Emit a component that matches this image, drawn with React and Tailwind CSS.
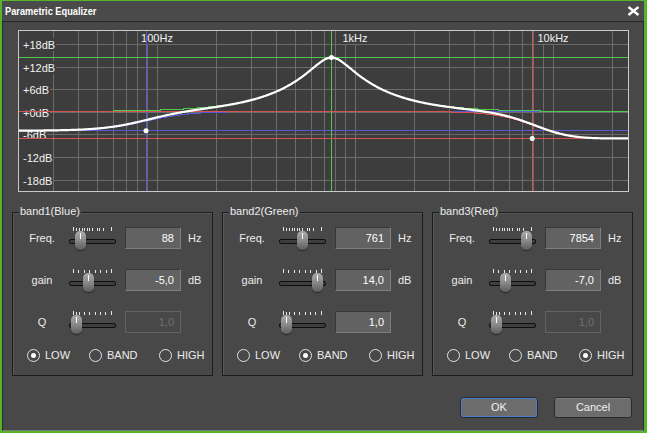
import React from "react";

const FS = 48000;
const fx = (f) => -239 + 198 * Math.log10(f);
const gy = (db) => 111.5 - db * 3.85;
const fOf = (x) => Math.pow(10, (x + 239) / 198);

const BANDS = [
  { name: "band1(Blue)", color: "#5858d4", type: "low", f: 88, g: -5, q: 1, mode: "LOW" },
  { name: "band2(Green)", color: "#4fc84f", type: "peak", f: 761, g: 14, q: 1, mode: "BAND" },
  { name: "band3(Red)", color: "#d45252", type: "high", f: 7854, g: -7, q: 1, mode: "HIGH" },
];

function coeffs(type, f0, gain, q) {
  const A = Math.pow(10, gain / 40);
  const w0 = (2 * Math.PI * f0) / FS;
  const cs = Math.cos(w0);
  const sn = Math.sin(w0);
  if (type === "peak") {
    const al = sn / (2 * q);
    return [1 + al * A, -2 * cs, 1 - al * A, 1 + al / A, -2 * cs, 1 - al / A];
  }
  const sa = 2 * Math.sqrt(A) * (sn / Math.SQRT2);
  if (type === "low")
    return [
      A * (A + 1 - (A - 1) * cs + sa),
      2 * A * (A - 1 - (A + 1) * cs),
      A * (A + 1 - (A - 1) * cs - sa),
      A + 1 + (A - 1) * cs + sa,
      -2 * (A - 1 + (A + 1) * cs),
      A + 1 + (A - 1) * cs - sa,
    ];
  return [
    A * (A + 1 + (A - 1) * cs + sa),
    -2 * A * (A - 1 + (A + 1) * cs),
    A * (A + 1 + (A - 1) * cs - sa),
    A + 1 - (A - 1) * cs + sa,
    2 * (A - 1 - (A + 1) * cs),
    A + 1 - (A - 1) * cs - sa,
  ];
}

function magDb(c, f) {
  const w = (2 * Math.PI * f) / FS;
  const c1 = Math.cos(w);
  const c2 = Math.cos(2 * w);
  const [b0, b1, b2, a0, a1, a2] = c;
  const num = b0 * b0 + b1 * b1 + b2 * b2 + 2 * (b0 * b1 + b1 * b2) * c1 + 2 * b0 * b2 * c2;
  const den = a0 * a0 + a1 * a1 + a2 * a2 + 2 * (a0 * a1 + a1 * a2) * c1 + 2 * a0 * a2 * c2;
  return 10 * Math.log10(num / den);
}

const GRID_F = [30, 40, 50, 60, 70, 80, 90, 100, 200, 300, 400, 500, 600, 700, 800, 900, 1000, 2000, 3000, 4000, 5000, 6000, 7000, 8000, 9000, 10000, 20000];
const DB_ROWS = [
  { y: 44, t: "+18dB", w: 32 },
  { y: 67, t: "+12dB", w: 32 },
  { y: 89, t: "+6dB", w: 26 },
  { y: 112, t: "+0dB", w: 26 },
  { y: 134, t: "-6dB", w: 23 },
  { y: 157, t: "-12dB", w: 29 },
  { y: 180, t: "-18dB", w: 29 },
];
const F_LABELS = [
  { f: 100, t: "100Hz", w: 32 },
  { f: 1000, t: "1kHz", w: 25 },
  { f: 10000, t: "10kHz", w: 31 },
];

const vx = (x) => Math.floor(x) + 0.5;

function Graph() {
  const xs = [];
  for (let x = 18; x <= 629; x++) xs.push(x);
  const cs = BANDS.map((b) => coeffs(b.type, b.f, b.g, b.q));
  // band curves snapped to whole pixel rows, like the GDI drawing
  const curves = cs.map((c) => xs.map((x) => `${x},${vx(gy(magDb(c, fOf(x))))}`).join(" "));
  const total = xs
    .map((x) => {
      const f = fOf(x);
      return `${x},${gy(cs.reduce((s, c) => s + magDb(c, f), 0)).toFixed(2)}`;
    })
    .join(" ");
  const font = "'Liberation Sans', Arial, sans-serif";

  return (
    <svg width="611" height="162" viewBox="18 30 611 162" className="block">
      <rect x="18" y="30" width="611" height="162" fill="#3d3d3d" />
      {GRID_F.map((f) => (
        <line key={f} x1={vx(fx(f))} x2={vx(fx(f))} y1="30" y2="192" stroke="#6b6b6b" strokeWidth="1" />
      ))}
      {DB_ROWS.map((r) => (
        <line key={r.t} x1="18" x2="629" y1={r.y + 0.5} y2={r.y + 0.5} stroke="#6b6b6b" strokeWidth="1" />
      ))}
      {DB_ROWS.map((r) => (
        <g key={r.t}>
          <rect x="19" y={r.y - 6} width={r.w + 5} height="13" fill="#3d3d3d" />
          <text x="23" y={r.y + 4.5} fontFamily={font} fontSize="11" fill="#f2f2f2">
            {r.t}
          </text>
        </g>
      ))}
      {F_LABELS.map((l) => {
        const cx = fx(l.f);
        return (
          <g key={l.t}>
            <rect x={cx - l.w / 2 - 1} y="31" width={l.w + 2} height="13" fill="#3d3d3d" />
            <text x={cx} y="42" textAnchor="middle" fontFamily={font} fontSize="11" fill="#f2f2f2">
              {l.t}
            </text>
          </g>
        );
      })}
      {BANDS.map((b) => (
        <g key={b.name}>
          <line x1="18" x2="629" y1={vx(gy(b.g))} y2={vx(gy(b.g))} stroke={b.color} strokeWidth="1" />
          <line x1={vx(fx(b.f))} x2={vx(fx(b.f))} y1="30" y2="192" stroke={b.color} strokeWidth="1" />
        </g>
      ))}
      {curves.map((p, i) => (
        <polyline key={i} points={p} fill="none" stroke={BANDS[i].color} strokeWidth="1" shapeRendering="crispEdges" />
      ))}
      <polyline points={total} fill="none" stroke="#ffffff" strokeWidth="2.2" />
      {BANDS.map((b) => (
        <circle key={b.name} cx={fx(b.f)} cy={gy(b.g)} r="2.5" fill="#ffffff" />
      ))}
      <rect x="18.5" y="30.5" width="610" height="161" fill="none" stroke="#c8c8c8" strokeWidth="1" />
    </svg>
  );
}

const FREQ_TICKS = [4, 7, 10, 13, 15, 18, 20, 23, 28, 30, 34, 42];
const GAIN_TICKS = [4, 9, 15, 20, 26, 31, 37, 42];
const Q_TICKS = [4, 7, 10, 15, 20, 26, 31, 36, 42];

function Slider({ ticks, pos }) {
  return (
    <div className="relative w-[47px] h-[22px] shrink-0">
      {ticks.map((t, i) => (
        <span
          key={i}
          className={`absolute w-px bg-[#e6e6e6] ${i === 0 || i === ticks.length - 1 ? "top-0 h-[4px]" : "top-[1px] h-[3px]"}`}
          style={{ left: t }}
        />
      ))}
      <div className="absolute left-0 right-0 top-[12px] h-[5px] rounded-[2px] border border-[#0e0e0e] bg-[#3e3e3e]" />
      <div
        className="absolute top-[4px] w-[11px] h-[19px] rounded-[5px] bg-gradient-to-b from-[#aaaaaa] via-[#8a8a8a] to-[#5c5c5c] shadow-[0_1px_1px_rgba(0,0,0,0.5)]"
        style={{ left: pos - 5.5 }}
      >
        <span className="absolute left-[5px] top-[2px] w-px h-[6px] bg-white" />
      </div>
    </div>
  );
}

function Field({ value, disabled }) {
  return (
    <div
      className={`ml-[9px] w-[56px] h-[22px] shrink-0 flex items-center justify-end pr-[6px] text-[11px] border ${
        disabled
          ? "bg-[#484848] border-[#626262] text-[#707070]"
          : "bg-[#626262] border-t-[#383838] border-l-[#383838] border-r-[#7e7e7e] border-b-[#7e7e7e] text-white"
      }`}
    >
      {value}
    </div>
  );
}

function Radio({ label, checked, width }) {
  return (
    <div className={`flex items-center gap-[5px] ${width}`}>
      <span className="w-[13px] h-[13px] rounded-full border-[1.5px] border-[#e2e2e2] flex items-center justify-center">
        {checked && <span className="w-[5px] h-[5px] rounded-full bg-white" />}
      </span>
      <span className="text-[11px] text-[#ececec]">{label}</span>
    </div>
  );
}

function Row({ label, children }) {
  return (
    <div className="flex items-center h-[22px]">
      <div className="w-[56px] pl-[2px] shrink-0 text-center text-[11px] text-[#ececec]">{label}</div>
      {children}
    </div>
  );
}

const fmt = (v) => v.toFixed(1).replace(".", ",");

function BandBox({ band }) {
  const freqPos = 11.5 + (Math.log10(band.f) - Math.log10(88)) * 13.3;
  const gainPos = 19 + (band.g + 5) * 1.04;
  const qDisabled = band.mode !== "BAND";
  return (
    <div className="relative w-[201px] h-[164px] shrink-0 border border-[#1c1c1c] shadow-[inset_1px_1px_0_#585858]">
      <span className="absolute left-[6px] top-[-8px] px-[1px] bg-[#484848] text-[11px] leading-[13px] text-[#ececec]">
        {band.name}
      </span>
      <div className="flex flex-col gap-[20px] pt-[14px]">
        <Row label="Freq.">
          <Slider ticks={FREQ_TICKS} pos={freqPos} />
          <Field value={String(band.f)} />
          <span className="ml-[7px] text-[11px] text-[#ececec]">Hz</span>
        </Row>
        <Row label="gain">
          <Slider ticks={GAIN_TICKS} pos={gainPos} />
          <Field value={fmt(band.g)} />
          <span className="ml-[7px] text-[11px] text-[#ececec]">dB</span>
        </Row>
        <Row label="Q">
          <Slider ticks={Q_TICKS} pos={7.5} />
          <Field value={fmt(band.q)} disabled={qDisabled} />
        </Row>
      </div>
      <div className="flex items-center h-[14px] mt-[15px] pl-[14px]">
        <Radio label="LOW" checked={band.mode === "LOW"} width="w-[62px]" />
        <Radio label="BAND" checked={band.mode === "BAND"} width="w-[70px]" />
        <Radio label="HIGH" checked={band.mode === "HIGH"} width="" />
      </div>
    </div>
  );
}

export default function App() {
  return (
    <div className="w-[647px] h-[433px] bg-[#56b42c] pt-[1px] pl-[2px] pr-[3px] pb-[2px] font-['Liberation_Sans',Arial,sans-serif] text-[#ececec]">
      <div className="h-full flex flex-col bg-[#484848]">
        <div className="h-[21px] shrink-0 flex items-center justify-between pl-[3px] pr-[4px] bg-[#4a4a4a] border-b border-[#262626]">
          <span className="inline-block origin-left scale-x-[0.84] font-bold text-[11px] text-white whitespace-nowrap">
            Parametric Equalizer
          </span>
          <svg width="13" height="10" viewBox="0 0 13 10">
            <path d="M1.5 1 L11.5 9 M11.5 1 L1.5 9" stroke="#ffffff" strokeWidth="2.4" />
          </svg>
        </div>
        <div className="flex-1 flex flex-col border-x border-x-[#2c2c2c] border-b border-b-[#7a7a7a]">
          <div className="mt-[8px] ml-[15px]">
            <Graph />
          </div>
          <div className="mt-[20px] ml-[9px] flex gap-[9px]">
            {BANDS.map((b) => (
              <BandBox key={b.name} band={b} />
            ))}
          </div>
          <div className="mt-[21px] pr-[11px] flex justify-end gap-[16px]">
            <button className="w-[78px] h-[21px] rounded-[3px] bg-[#6c6c6c] border border-[#2a2a2a] shadow-[inset_0_0_0_1px_#4a7fd0] text-[11px] text-[#f0f0f0]">
              OK
            </button>
            <button className="w-[78px] h-[21px] rounded-[3px] bg-[#6c6c6c] border border-[#2a2a2a] shadow-[inset_0_1px_0_#7e7e7e] text-[11px] text-[#f0f0f0]">
              Cancel
            </button>
          </div>
        </div>
      </div>
    </div>
  );
}
